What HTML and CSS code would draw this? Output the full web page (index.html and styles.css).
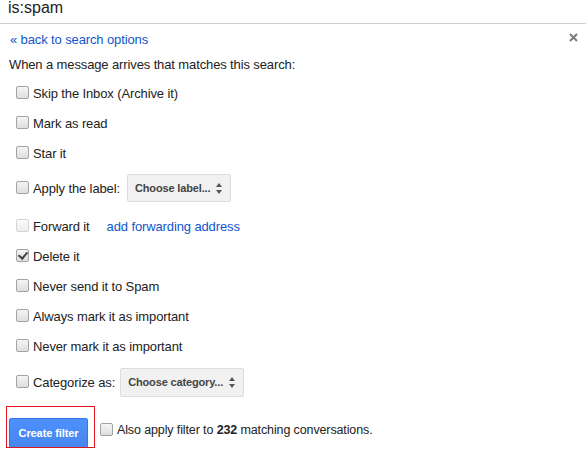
FILE: index.html
```html
<!DOCTYPE html>
<html lang="en">
	<head>
		<meta charset="UTF-8" />
		<meta name="viewport" content="width=device-width, initial-scale=1.0" />
		<link rel="stylesheet" href="styles.css">
		<title>Create filter</title>
	</head>
	<body>
		<div class="search_bar">
			<span class="query">is:spam</span>
		</div>
		<div class="filter_panel">
			<button class="close" title="Close">
				<svg width="9" height="9" viewBox="0 0 9 9">
					<path d="M1 1 L8 8 M8 1 L1 8" stroke="#7b7b7b" stroke-width="2" />
				</svg>
			</button>
			<a class="back_link" href="#">&laquo; back to search options</a>
			<p class="intro">When a message arrives that matches this search:</p>

			<div class="actions">
				<label class="action">
					<input type="checkbox" class="cb" /> Skip the Inbox (Archive it)
				</label>
				<label class="action">
					<input type="checkbox" class="cb" /> Mark as read
				</label>
				<label class="action">
					<input type="checkbox" class="cb" /> Star it
				</label>
				<div class="action label_row">
					<label class="inline"><input type="checkbox" class="cb" /> Apply the label:</label>
					<div class="pick pick_label">
						<span>Choose label...</span>
						<span class="updown"></span>
					</div>
				</div>
				<div class="action forward_row">
					<label class="inline"><input type="checkbox" class="cb" disabled /> Forward it</label>
					<a class="fwd_link" href="#">add forwarding address</a>
				</div>
				<label class="action">
					<input type="checkbox" class="cb" checked /> Delete it
				</label>
				<label class="action">
					<input type="checkbox" class="cb" /> Never send it to Spam
				</label>
				<label class="action">
					<input type="checkbox" class="cb" /> Always mark it as important
				</label>
				<label class="action">
					<input type="checkbox" class="cb" /> Never mark it as important
				</label>
				<div class="action cat_row">
					<label class="inline"><input type="checkbox" class="cb" /> Categorize as:</label>
					<div class="pick pick_cat">
						<span>Choose category...</span>
						<span class="updown"></span>
					</div>
				</div>
			</div>

			<div class="footer">
				<div class="highlight">
					<button class="create_btn">Create filter</button>
				</div>
				<label class="also">
					<input type="checkbox" class="cb" />
					<span>Also apply filter to <b>232</b> matching conversations.</span>
				</label>
			</div>
		</div>
	</body>
</html>
```

FILE: styles.css
```css
* {
	margin: 0;
	padding: 0;
	box-sizing: border-box;
}
body {
	font-family: "Liberation Sans", Arial, sans-serif;
	font-size: 13px;
	letter-spacing: -0.12px;
	color: #222;
	background: #fff;
}
a {
	color: #15c;
	text-decoration: none;
}

/* search box strip */
.search_bar {
	height: 24px;
	padding-left: 8px;
	border-bottom: 1px solid #cfcfcf;
}
.query {
	display: block;
	font-size: 16px;
	line-height: 16px;
	letter-spacing: 0;
	color: #222;
}

.filter_panel {
	position: relative;
	padding-top: 8px;
}
.close {
	position: absolute;
	top: 9px;
	right: 8px;
	border: none;
	background: none;
	width: 9px;
	height: 9px;
	cursor: pointer;
}
.close svg {
	display: block;
}
.back_link {
	display: block;
	line-height: 16px;
	padding-left: 10px;
}
.intro {
	line-height: 16px;
	margin-top: 9px;
	padding-left: 9px;
}

/* action list */
.actions {
	margin-top: 5px;
	display: flex;
	flex-direction: column;
}
.action {
	height: 30px;
	display: flex;
	align-items: center;
	gap: 4px;
	padding-left: 16px;
}
.inline {
	display: flex;
	align-items: center;
	gap: 4px;
}
.label_row {
	margin-top: 5px;
}
.forward_row {
	margin-top: 8px;
}
.cat_row {
	margin-top: 6px;
}
.fwd_link {
	margin-left: 13px;
}

.cb {
	appearance: none;
	-webkit-appearance: none;
	width: 13px;
	height: 13px;
	margin: 0 0 2px 0;
	border: 1px solid #a3a3a3;
	border-radius: 2px;
	background: linear-gradient(#f5f5f5, #dedede);
	position: relative;
	flex: none;
}
.cb:checked::after {
	content: "";
	position: absolute;
	left: 3px;
	top: 0px;
	width: 4px;
	height: 7px;
	border-right: 2px solid #444;
	border-bottom: 2px solid #444;
	transform: rotate(40deg);
}
.cb:disabled {
	border-color: #d4d4d4;
	background: linear-gradient(#fafafa, #eeeeee);
}

/* fake select boxes */
.pick {
	display: flex;
	align-items: center;
	justify-content: space-between;
	padding: 0 7px;
	background: #f1f1f1;
	border: 1px solid #dcdcdc;
	border-radius: 2px;
	font-size: 11px;
	font-weight: bold;
	letter-spacing: -0.15px;
	white-space: nowrap;
	color: #444;
}
.pick_label {
	width: 104px;
	height: 28px;
	margin-left: 3px;
}
.pick_cat {
	width: 124px;
	height: 29px;
	margin-left: 1px;
}
.updown {
	position: relative;
	flex: none;
	width: 7px;
	height: 11px;
	margin-left: 4px;
}
.updown::before,
.updown::after {
	content: "";
	position: absolute;
	left: 0;
	border-left: 3.5px solid transparent;
	border-right: 3.5px solid transparent;
}
.updown::before {
	top: 0;
	border-bottom: 4px solid #555;
}
.updown::after {
	bottom: 0;
	border-top: 4px solid #555;
}

/* footer with the create button */
.footer {
	display: flex;
	align-items: flex-start;
	margin-top: 9px;
	padding-left: 6px;
}
.highlight {
	height: 42px;
	padding: 11px 6px 0 2px;
	border: 1px solid #e3141f;
	overflow: hidden;
}
.create_btn {
	display: block;
	width: 79px;
	height: 30px;
	background: linear-gradient(#4d90fe, #4787ed);
	border: 1px solid #3079ed;
	border-radius: 2px;
	color: #fff;
	font-family: "Liberation Sans", Arial, sans-serif;
	font-size: 11px;
	font-weight: bold;
	letter-spacing: -0.1px;
	cursor: pointer;
}
.also {
	display: flex;
	align-items: center;
	gap: 4px;
	margin-left: 5px;
	margin-top: 16px;
	font-size: 12.5px;
	line-height: 16px;
}
```
